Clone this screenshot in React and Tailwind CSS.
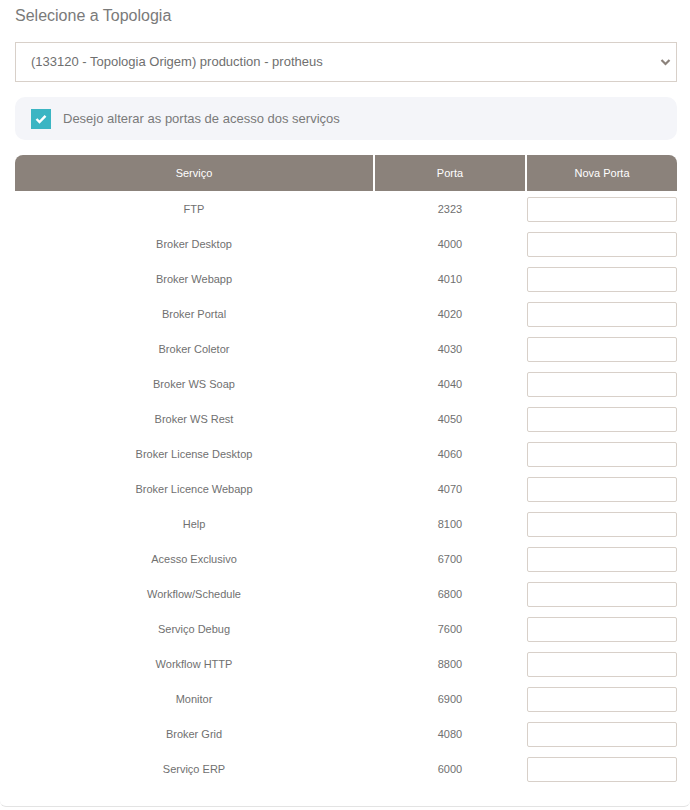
import React, { useState } from 'react';

const SERVICES = [
    ['FTP', '2323'],
    ['Broker Desktop', '4000'],
    ['Broker Webapp', '4010'],
    ['Broker Portal', '4020'],
    ['Broker Coletor', '4030'],
    ['Broker WS Soap', '4040'],
    ['Broker WS Rest', '4050'],
    ['Broker License Desktop', '4060'],
    ['Broker Licence Webapp', '4070'],
    ['Help', '8100'],
    ['Acesso Exclusivo', '6700'],
    ['Workflow/Schedule', '6800'],
    ['Serviço Debug', '7600'],
    ['Workflow HTTP', '8800'],
    ['Monitor', '6900'],
    ['Broker Grid', '4080'],
    ['Serviço ERP', '6000'],
];

export default function App() {
    const [checked, setChecked] = useState(true);

    return (
        <div className="w-[690px] h-[810px] bg-white font-['Liberation_Sans',Arial,sans-serif] text-[#777]">
            <div className="h-[807px] border-b border-[#e3e3e3] rounded-b-[6px] pl-[15px] pr-[13px] pt-[6px]">
                <h2 className="text-[16px] leading-[20px] text-[#7a7a7a]">Selecione a Topologia</h2>

                <div className="relative mt-[16px] h-[40px] border border-[#d8d0c9] flex items-center pl-[15px]">
                    <span className="text-[13px] text-[#6f6f6f]">(133120 - Topologia Origem) production - protheus</span>
                    <svg className="absolute right-[5px] top-[15px]" width="11" height="8" viewBox="0 0 11 8">
                        <path d="M1.5 2 L5.5 6 L9.5 2" fill="none" stroke="#8b827b" strokeWidth="2.2" />
                    </svg>
                </div>

                <div className="mt-[15px] h-[43px] rounded-[10px] bg-[#f4f5f9] flex items-center pl-[16px]">
                    <button
                        onClick={() => setChecked(!checked)}
                        className={`w-[20px] h-[20px] flex items-center justify-center ${checked ? 'bg-[#3bb5c3]' : 'bg-white border border-[#ccc]'}`}
                    >
                        {checked && (
                            <svg width="12" height="10" viewBox="0 0 12 10">
                                <path d="M1.5 5 L4.5 8 L10.5 1.8" fill="none" stroke="#fff" strokeWidth="2.4" />
                            </svg>
                        )}
                    </button>
                    <span className="ml-[12px] text-[13px] text-[#7a7a7a]">Desejo alterar as portas de acesso dos serviços</span>
                </div>

                <div className="mt-[15px]">
                    <div className="flex gap-[2px] h-[36px] text-[11px] text-white">
                        <div className="w-[358px] bg-[#8b827b] rounded-tl-[8px] flex items-center justify-center">Serviço</div>
                        <div className="w-[150px] bg-[#8b827b] flex items-center justify-center">Porta</div>
                        <div className="w-[150px] bg-[#8b827b] rounded-tr-[8px] flex items-center justify-center">Nova Porta</div>
                    </div>
                    <div className="pt-[1px]">
                        {SERVICES.map(([name, port]) => (
                            <div key={name} className="flex gap-[2px] h-[35px] items-center text-[11px] text-[#707070]">
                                <div className="w-[358px] text-center">{name}</div>
                                <div className="w-[150px] text-center">{port}</div>
                                <div className="w-[150px]">
                                    <input className="w-full h-[25px] border border-[#d8d0c9] rounded-[2px] outline-none px-2" />
                                </div>
                            </div>
                        ))}
                    </div>
                </div>
            </div>
        </div>
    );
}
